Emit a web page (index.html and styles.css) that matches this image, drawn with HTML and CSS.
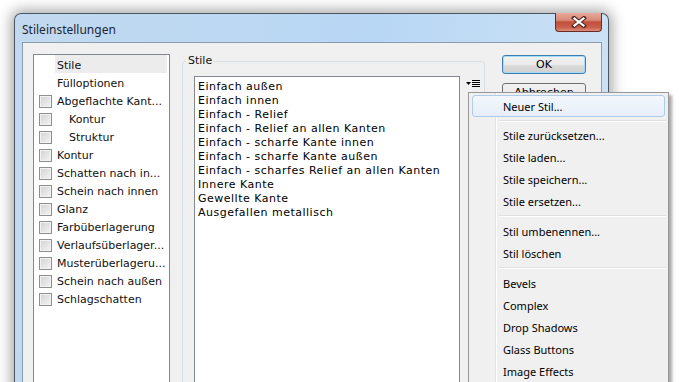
FILE: index.html
```html
<!DOCTYPE html>
<html lang="de">
<head>
  <meta charset="UTF-8">
  <title>Stileinstellungen</title>
  <link rel="stylesheet" href="styles.css">
</head>
<body>
  <div class="desk">
    <div class="window">
      <div class="titlebar">
        <span class="title">Stileinstellungen</span>
        <span class="close">
          <svg width="16" height="12" viewBox="0 0 16 12">
            <path d="M3 2 L13 10 M13 2 L3 10" stroke="#5a2a24" stroke-width="4.2" stroke-linecap="square"/>
            <path d="M3.5 2.5 L12.5 9.5 M12.5 2.5 L3.5 9.5" stroke="#fff" stroke-width="2.2" stroke-linecap="square"/>
          </svg>
        </span>
      </div>
      <div class="client">
        <ul class="fx-list">
          <li class="fx selected"><span class="nobox"></span>Stile</li>
          <li class="fx"><span class="nobox"></span>Fülloptionen</li>
          <li class="fx"><span class="check"></span>Abgeflachte Kant...</li>
          <li class="fx sub"><span class="check"></span>Kontur</li>
          <li class="fx sub"><span class="check"></span>Struktur</li>
          <li class="fx"><span class="check"></span>Kontur</li>
          <li class="fx"><span class="check"></span>Schatten nach in...</li>
          <li class="fx"><span class="check"></span>Schein nach innen</li>
          <li class="fx"><span class="check"></span>Glanz</li>
          <li class="fx"><span class="check"></span>Farbüberlagerung</li>
          <li class="fx"><span class="check"></span>Verlaufsüberlager...</li>
          <li class="fx"><span class="check"></span>Musterüberlageru...</li>
          <li class="fx"><span class="check"></span>Schein nach außen</li>
          <li class="fx"><span class="check"></span>Schlagschatten</li>
        </ul>

        <fieldset class="group">
          <legend>Stile</legend>
          <div class="group-row">
            <ul class="style-list">
              <li>Einfach außen</li>
              <li>Einfach innen</li>
              <li>Einfach - Relief</li>
              <li>Einfach - Relief an allen Kanten</li>
              <li>Einfach - scharfe Kante innen</li>
              <li>Einfach - scharfe Kante außen</li>
              <li>Einfach - scharfes Relief an allen Kanten</li>
              <li>Innere Kante</li>
              <li>Gewellte Kante</li>
              <li>Ausgefallen metallisch</li>
            </ul>
            <span class="menu-btn">
              <svg width="14" height="7" viewBox="0 0 14 7">
                <path d="M0 2 H5 L2.5 5 Z" fill="#000"/>
                <path d="M6 0.5 H14 M6 2.5 H14 M6 4.5 H14 M6 6.5 H14" stroke="#000" stroke-width="1"/>
              </svg>
            </span>
          </div>
        </fieldset>

        <div class="buttons">
          <button class="btn ok">OK</button>
          <button class="btn">Abbrechen</button>
        </div>
      </div>
    </div>

    <div class="popup">
      <div class="item hot">Neuer Stil...</div>
      <div class="sep first"></div>
      <div class="item">Stile zurücksetzen...</div>
      <div class="item">Stile laden...</div>
      <div class="item">Stile speichern...</div>
      <div class="item">Stile ersetzen...</div>
      <div class="sep"></div>
      <div class="item">Stil umbenennen...</div>
      <div class="item">Stil löschen</div>
      <div class="sep"></div>
      <div class="item">Bevels</div>
      <div class="item">Complex</div>
      <div class="item">Drop Shadows</div>
      <div class="item">Glass Buttons</div>
      <div class="item">Image Effects</div>
    </div>
  </div>
</body>
</html>
```

FILE: styles.css
```css
html, body {
  margin: 0;
  height: 100%;
  overflow: hidden;
  background: #fff;
}
.desk {
  position: relative;
  padding: 13px 0 0 14px;
  font-family: "DejaVu Sans", Verdana, sans-serif;
}
.window {
  width: 580px;
  height: 420px;
  padding: 0 6px 0 7px;
  border: 1px solid #4b5560;
  border-bottom: none;
  border-radius: 7px 7px 0 0;
  background: linear-gradient(100deg, #c2d9f0 0%, #b8d7f4 55%, #d0e4f6 100%);
  box-shadow: 0 0 14px 3px rgba(0,0,0,0.35);
}
.titlebar {
  height: 28px;
  display: flex;
  justify-content: space-between;
  align-items: flex-start;
}
.title {
  font-family: "Noto Sans", "Open Sans", sans-serif;
  font-size: 12px;
  color: #1b2733;
  line-height: 14px;
  margin-top: 9px;
}
.close {
  width: 45px;
  height: 18px;
  margin-top: -1px;
  border: 1px solid #6b2b22;
  border-top: none;
  border-radius: 0 0 4px 4px;
  background: linear-gradient(#e6aa9c 0%, #d88a78 40%, #c24f3b 50%, #c9604c 80%, #dc8f7c 100%);
  display: flex;
  align-items: center;
  justify-content: center;
}
.client {
  height: 390px;
  border: 1px solid #8b9cae;
  border-bottom: none;
  background: #f0f0f0;
  display: flex;
  align-items: flex-start;
  padding: 11px 0 0 10px;
}

/* Effektliste links */
.fx-list {
  list-style: none;
  margin: 0;
  padding: 0;
  width: 135px;
  height: 380px;
  background: #fff;
  border: 1px solid #828790;
  font-size: 11px;
  color: #111;
}
.fx {
  height: 18px;
  box-sizing: border-box;
  padding: 3px 0 0 5px;
  display: flex;
  align-items: center;
  white-space: nowrap;
  overflow: hidden;
}
.fx.selected {
  background: linear-gradient(90deg, #fff 0 21px, #ececec 21px 133px, #fff 133px);
}
.fx.sub .check {
  margin-right: 17px;
}
.check, .nobox {
  width: 11px;
  height: 11px;
  margin-right: 5px;
  flex: none;
}
.check {
  border: 1px solid #8e8f8f;
  background: linear-gradient(135deg, #d2d2d2, #f4f4f4);
  box-shadow: inset 0 0 0 1px #f2f2f2;
}
.nobox {
  border: 1px solid transparent;
}

/* Gruppe Stile */
.group {
  margin: 0 0 0 12px;
  height: 380px;
  padding: 8px 4px 0 11px;
  border: 1px solid #d5dfe5;
  border-radius: 3px;
  box-sizing: border-box;
  width: 302px;
}
.group legend {
  font-size: 11px;
  color: #111;
  padding: 0 2px;
  margin-left: -8px;
  line-height: 14px;
}
.group-row {
  display: flex;
  align-items: flex-start;
}
.style-list {
  list-style: none;
  margin: 0;
  padding: 3px 0 0 3px;
  width: 261px;
  height: 340px;
  background: #fff;
  border: 1px solid #828790;
  font-size: 11px;
  letter-spacing: 0.5px;
  line-height: 14px;
  color: #000;
  white-space: nowrap;
  overflow: hidden;
}
.menu-btn {
  margin: 4px 0 0 6px;
  display: flex;
}

/* Knöpfe */
.buttons {
  margin-left: 17px;
  display: flex;
  flex-direction: column;
  gap: 9px;
  margin-top: 1px;
}
.btn {
  width: 84px;
  height: 19px;
  padding: 0;
  border: 1px solid #707070;
  border-radius: 3px;
  background: linear-gradient(#f2f2f2 0%, #ebebeb 50%, #dddddd 51%, #cfcfcf 100%);
  font-family: "DejaVu Sans", Verdana, sans-serif;
  font-size: 11px;
  color: #000;
  line-height: 16px;
}
.btn.ok {
  border-color: #3c7fb1;
  box-shadow: inset 0 0 0 1px #a4dcf6;
}

/* Kontextmenü */
.popup {
  position: absolute;
  left: 468px;
  top: 92px;
  width: 197px;
  height: 300px;
  padding: 2px 1px 0 1px;
  border: 1px solid #979797;
  background: linear-gradient(90deg, #f0f0f0 0 26px, #e2e3e3 26px 27px, #ffffff 27px 28px, #f0f0f0 28px);
  box-shadow: 3px 3px 3px rgba(0,0,0,0.35);
  font-family: "Noto Sans", "Open Sans", sans-serif;
  font-size: 11px;
  color: #000;
}
.item {
  height: 22px;
  line-height: 21px;
  padding-left: 31px;
  margin: 0 1px;
  border: 1px solid transparent;
  box-sizing: border-box;
  border-radius: 3px;
}
.item.hot {
  margin: 0 2px;
  padding-left: 30px;
  border-color: #aeccec;
  background: linear-gradient(#f3f7fc, #e6eef9);
}
.sep {
  height: 8px;
  margin-left: 29px;
  margin-right: 1px;
  background: linear-gradient(#f0f0f0 0 3px, #e0e0e0 3px 4px, #ffffff 4px 5px, #f0f0f0 5px);
}
.sep.first {
  height: 7px;
}
```
